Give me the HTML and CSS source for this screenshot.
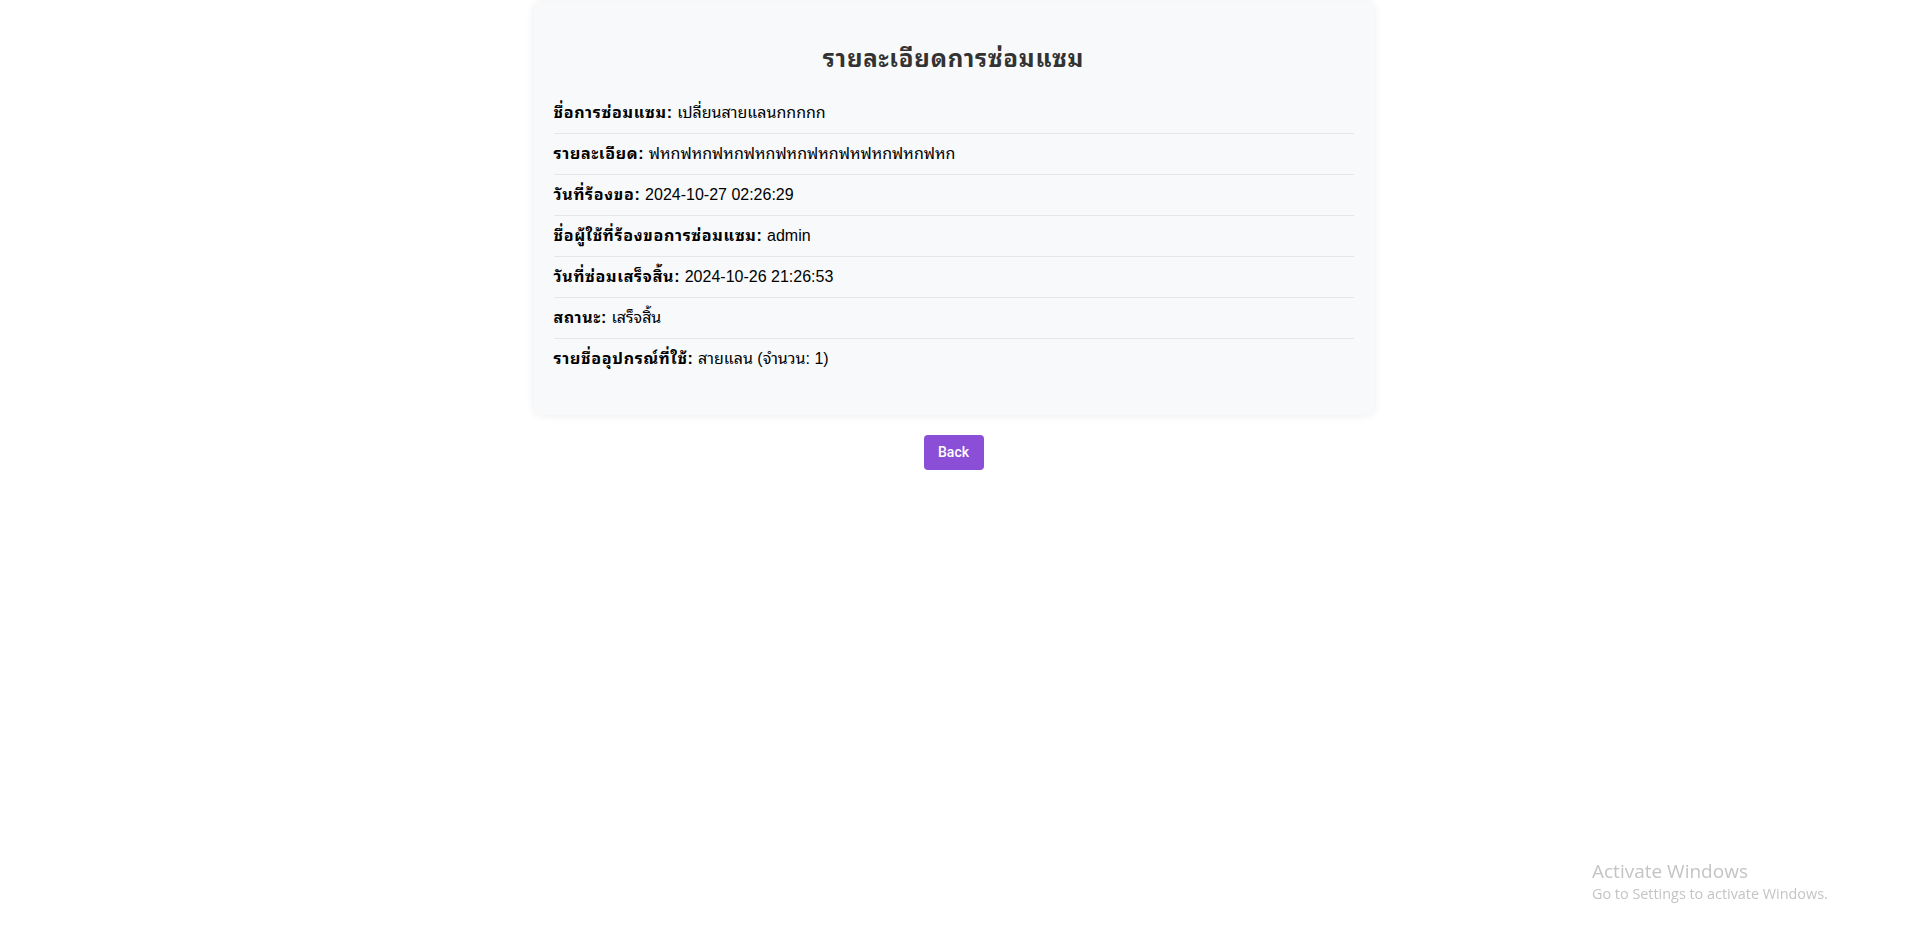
FILE: index.html
```html
<!DOCTYPE html>
<html lang="th">
<head>
<meta charset="utf-8">
<title>รายละเอียดการซ่อมแซม</title>
<link rel="stylesheet" href="styles.css">
</head>
<body>
<main class="page">
  <section class="card">
    <h2 class="title">รายละเอียดการซ่อมแซม</h2>
    <div class="rows">
      <p class="row"><strong>ชื่อการซ่อมแซม:</strong> เปลี่ยนสายแลนกกกกก</p>
      <p class="row"><strong>รายละเอียด:</strong> ฟหกฟหกฟหกฟหกฟหกฟหกฟหฟหกฟหกฟหก</p>
      <p class="row"><strong>วันที่ร้องขอ:</strong> 2024-10-27 02:26:29</p>
      <p class="row"><strong>ชื่อผู้ใช้ที่ร้องขอการซ่อมแซม:</strong> admin</p>
      <p class="row"><strong>วันที่ซ่อมเสร็จสิ้น:</strong> 2024-10-26 21:26:53</p>
      <p class="row"><strong>สถานะ:</strong> เสร็จสิ้น</p>
      <p class="row last"><strong>รายชื่ออุปกรณ์ที่ใช้:</strong> สายแลน (จำนวน: 1)</p>
    </div>
  </section>
  <div class="actions">
    <a class="btn" href="#">Back</a>
  </div>
</main>
<div class="watermark">
  <div class="wm-title">Activate Windows</div>
  <div class="wm-sub">Go to Settings to activate Windows.</div>
</div>
</body>
</html>
```

FILE: styles.css
```css
html, body {
  margin: 0;
  padding: 0;
  background: #ffffff;
}
body {
  font-family: "Liberation Sans", Arial, "Noto Sans Thai Looped", Loma, Garuda, "Noto Sans Thai", Tahoma, sans-serif;
  color: #000;
}
.page {
  padding-top: 2px;
  display: flex;
  flex-direction: column;
  align-items: center;
}
.card {
  width: 800px;
  padding: 20px 20px 36px;
  background: #f8f9fa;
  border-radius: 8px;
  box-shadow: 0 0 10px rgba(0, 0, 0, 0.08);
}
.title {
  margin: 23px 0 20px;
  text-align: center;
  font-size: 24px;
  line-height: 28px;
  font-weight: bold;
  letter-spacing: 0.8px;
  color: #333;
}
.rows {
  display: flex;
  flex-direction: column;
}
.row {
  margin: 0;
  padding: 10px 0;
  font-size: 16px;
  line-height: 20px;
  border-bottom: 1px solid #e4e6e9;
}
.row.last {
  border-bottom: none;
}
.row strong {
  font-weight: bold;
  letter-spacing: 0.7px;
}
.actions {
  margin-top: 20px;
  display: flex;
  justify-content: center;
}
.btn {
  display: inline-block;
  width: 60px;
  height: 35px;
  line-height: 35px;
  text-align: center;
  background: #8a4fd6;
  color: #fff;
  border-radius: 4px;
  text-decoration: none;
  font-family: Roboto, "Liberation Sans", sans-serif;
  font-size: 14px;
  font-weight: 500;
}
.watermark {
  position: fixed;
  left: 1592px;
  top: 859px;
  color: #c4c4c4;
  font-family: "Open Sans", "Noto Sans", sans-serif;
}
.wm-title {
  font-size: 19px;
  line-height: 25px;
}
.wm-sub {
  font-size: 14.4px;
  line-height: 19px;
}
```
